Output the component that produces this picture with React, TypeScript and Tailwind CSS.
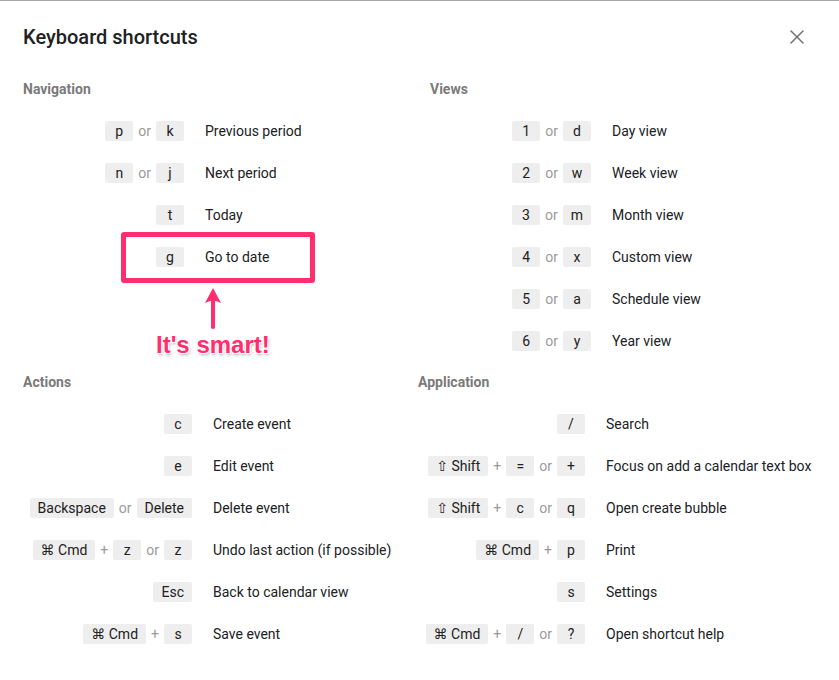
import { X } from "lucide-react"

type Shortcut = { keys: string[]; label: string }
type Section = { title: string; width: string; keyCol: string; rows: Shortcut[] }

// separators start with "~" so a real "+" key can still be a key
const navigation: Section = {
  title: "Navigation",
  width: "w-[407px]",
  keyCol: "w-[161px]",
  rows: [
    { keys: ["p", "~or", "k"], label: "Previous period" },
    { keys: ["n", "~or", "j"], label: "Next period" },
    { keys: ["t"], label: "Today" },
    { keys: ["g"], label: "Go to date" },
  ],
}

const views: Section = {
  title: "Views",
  width: "flex-1",
  keyCol: "w-[161px]",
  rows: [
    { keys: ["1", "~or", "d"], label: "Day view" },
    { keys: ["2", "~or", "w"], label: "Week view" },
    { keys: ["3", "~or", "m"], label: "Month view" },
    { keys: ["4", "~or", "x"], label: "Custom view" },
    { keys: ["5", "~or", "a"], label: "Schedule view" },
    { keys: ["6", "~or", "y"], label: "Year view" },
  ],
}

const actions: Section = {
  title: "Actions",
  width: "w-[395px]",
  keyCol: "w-[169px]",
  rows: [
    { keys: ["c"], label: "Create event" },
    { keys: ["e"], label: "Edit event" },
    { keys: ["Backspace", "~or", "Delete"], label: "Delete event" },
    { keys: ["⌘ Cmd", "~+", "z", "~or", "z"], label: "Undo last action (if possible)" },
    { keys: ["Esc"], label: "Back to calendar view" },
    { keys: ["⌘ Cmd", "~+", "s"], label: "Save event" },
  ],
}

const application: Section = {
  title: "Application",
  width: "flex-1",
  keyCol: "w-[167px]",
  rows: [
    { keys: ["/"], label: "Search" },
    { keys: ["⇧ Shift", "~+", "=", "~or", "+"], label: "Focus on add a calendar text box" },
    { keys: ["⇧ Shift", "~+", "c", "~or", "q"], label: "Open create bubble" },
    { keys: ["⌘ Cmd", "~+", "p"], label: "Print" },
    { keys: ["s"], label: "Settings" },
    { keys: ["⌘ Cmd", "~+", "/", "~or", "?"], label: "Open shortcut help" },
  ],
}

function KeyCap({ value }: { value: string }) {
  if (value.startsWith("~")) {
    return <span className="px-[5px] text-[#9a9a9a]">{value.slice(1)}</span>
  }
  return (
    <span className="inline-flex h-[20px] min-w-[28px] items-center justify-center rounded-[2px] bg-[#eeeeee] px-2 text-[#212121]">
      {value}
    </span>
  )
}

function ShortcutSection({ section }: { section: Section }) {
  return (
    <div className={section.width}>
      <h3 className="h-[20px] text-[14px] leading-[20px] font-bold text-[#7a7a7a]">{section.title}</h3>
      <div className="mt-[11px]">
        {section.rows.map((row) => (
          <div key={row.label} className="flex h-[42px] items-center">
            <div className={`flex shrink-0 items-center justify-end ${section.keyCol}`}>
              {row.keys.map((k, i) => (
                <KeyCap key={i} value={k} />
              ))}
            </div>
            <span className="pl-[21px] text-[#202124]">{row.label}</span>
          </div>
        ))}
      </div>
    </div>
  )
}

export default function App() {
  return (
    <div
      className="relative h-[680px] w-[839px] overflow-hidden border-t border-[#a8a8a8] bg-white pt-[22px] pl-[23px] text-[14px] leading-[20px]"
      style={{ fontFamily: 'Roboto, "DejaVu Sans", sans-serif' }}
    >
      {/* Header */}
      <div className="flex h-[28px] items-center justify-between pr-[30px]">
        <h2 className="text-[20px] font-medium text-[#202124]">Keyboard shortcuts</h2>
        <X className="h-[24px] w-[24px] text-[#757575]" strokeWidth={1.6} />
      </div>

      <div className="mt-[28px] flex">
        <ShortcutSection section={navigation} />
        <ShortcutSection section={views} />
      </div>

      <div className="mt-[10px] flex">
        <ShortcutSection section={actions} />
        <ShortcutSection section={application} />
      </div>

      {/* Annotation overlay */}
      <div className="absolute top-[231px] left-[121px] h-[51px] w-[194px] rounded-[3px] border-[5px] border-[#ff2e6e]" />
      <svg className="absolute top-[286px] left-[203px]" width="20" height="44" viewBox="0 0 20 44">
        <path d="M10 1 L18 16 Q13 13.5 12 14 L12 41 Q10 43 8 41 L8 14 Q7 13.5 2 16 Z" fill="#ff2e6e" />
      </svg>
      <div
        className="absolute top-[329px] left-[156px] text-[24px] leading-[30px] font-bold text-[#ff2e6e]"
        style={{
          fontFamily: '"Liberation Sans", Arial, sans-serif',
          textShadow:
            "0 0 2px #fff, 1px 1px 0 #fff, -1px -1px 0 #fff, 1px -1px 0 #fff, -1px 1px 0 #fff, 1px 2px 3px rgba(0,0,0,0.35)",
        }}
      >
        It's smart!
      </div>
    </div>
  )
}
